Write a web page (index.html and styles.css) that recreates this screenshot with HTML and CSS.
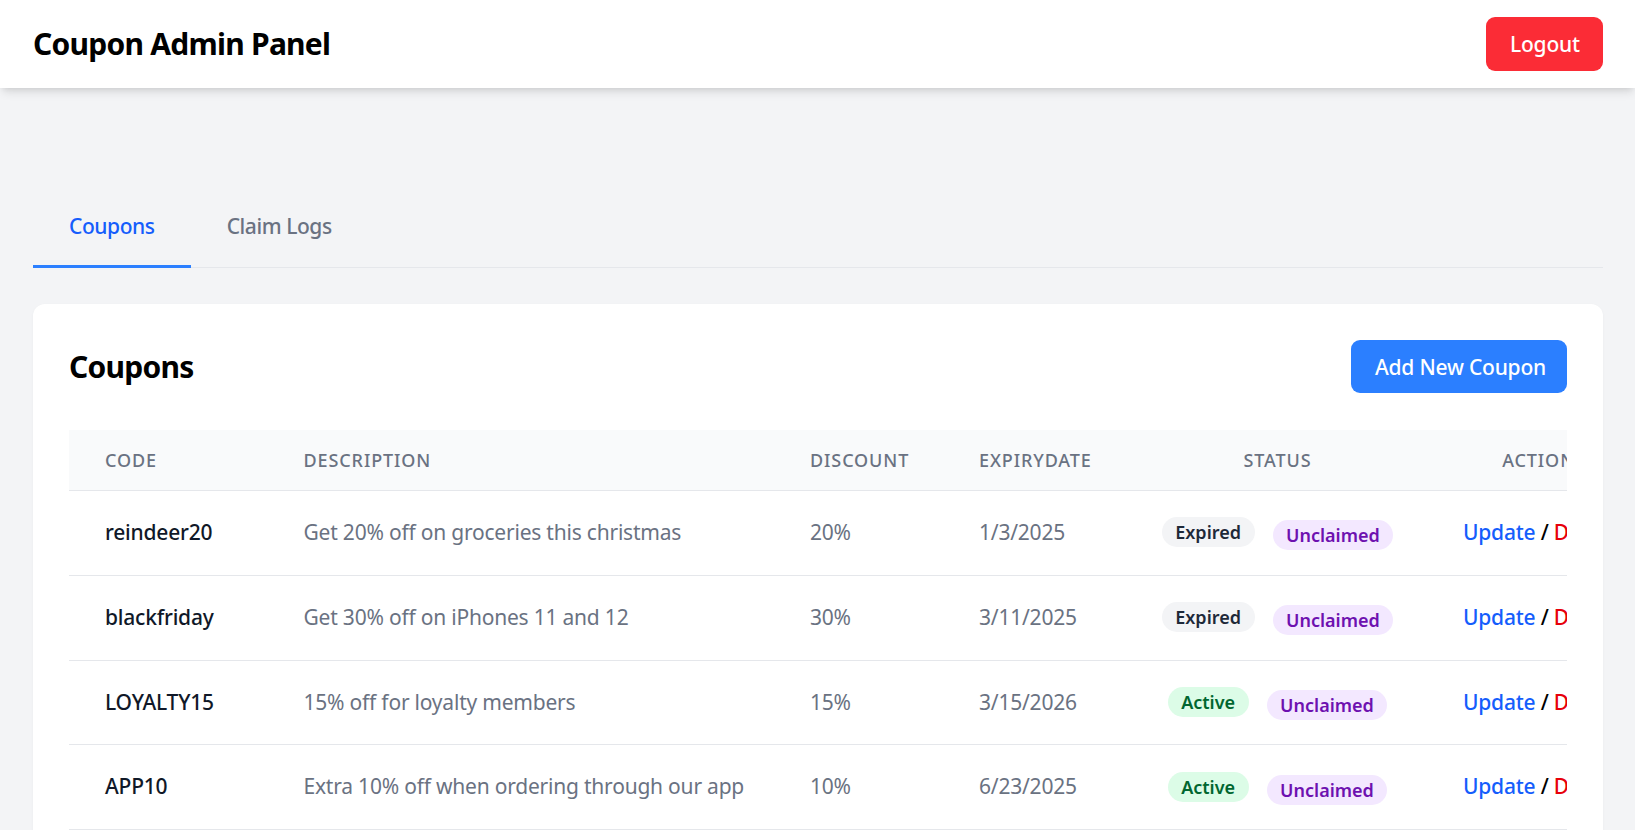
FILE: index.html
```html
<!DOCTYPE html>
<html lang="en">
<head>
<meta charset="utf-8">
<title>Coupon Admin Panel</title>
<link rel="stylesheet" href="styles.css">
</head>
<body>
<header class="topbar">
  <h1 class="brand">Coupon Admin Panel</h1>
  <button class="btn btn-logout">Logout</button>
</header>
<main class="main">
  <nav class="tabs">
    <a class="tab tab-active">Coupons</a>
    <a class="tab">Claim Logs</a>
  </nav>
  <section class="card">
    <div class="card-head">
      <h2 class="card-title">Coupons</h2>
      <button class="btn btn-add">Add New Coupon</button>
    </div>
    <div class="table-wrap">
      <table class="table">
        <colgroup>
          <col class="c-code"><col class="c-desc"><col class="c-disc"><col class="c-exp"><col class="c-status"><col class="c-actions">
        </colgroup>
        <thead>
          <tr>
            <th>Code</th>
            <th>Description</th>
            <th>Discount</th>
            <th>ExpiryDate</th>
            <th class="center">Status</th>
            <th class="center">Actions</th>
          </tr>
        </thead>
        <tbody>
          <tr>
            <td class="code">reindeer20</td>
            <td>Get 20% off on groceries this christmas</td>
            <td>20%</td>
            <td>1/3/2025</td>
            <td><div class="badges"><span class="badge badge-expired">Expired</span><span class="badge badge-unclaimed">Unclaimed</span></div></td>
            <td class="actions"><a class="link-update">Update</a> / <a class="link-delete">Delete</a></td>
          </tr>
          <tr>
            <td class="code">blackfriday</td>
            <td>Get 30% off on iPhones 11 and 12</td>
            <td>30%</td>
            <td>3/11/2025</td>
            <td><div class="badges"><span class="badge badge-expired">Expired</span><span class="badge badge-unclaimed">Unclaimed</span></div></td>
            <td class="actions"><a class="link-update">Update</a> / <a class="link-delete">Delete</a></td>
          </tr>
          <tr>
            <td class="code">LOYALTY15</td>
            <td>15% off for loyalty members</td>
            <td>15%</td>
            <td>3/15/2026</td>
            <td><div class="badges"><span class="badge badge-active">Active</span><span class="badge badge-unclaimed">Unclaimed</span></div></td>
            <td class="actions"><a class="link-update">Update</a> / <a class="link-delete">Delete</a></td>
          </tr>
          <tr>
            <td class="code">APP10</td>
            <td>Extra 10% off when ordering through our app</td>
            <td>10%</td>
            <td>6/23/2025</td>
            <td><div class="badges"><span class="badge badge-active">Active</span><span class="badge badge-unclaimed">Unclaimed</span></div></td>
            <td class="actions"><a class="link-update">Update</a> / <a class="link-delete">Delete</a></td>
          </tr>
        </tbody>
      </table>
    </div>
  </section>
</main>
</body>
</html>
```

FILE: styles.css
```css
* { box-sizing: border-box; }

html, body {
  margin: 0;
  padding: 0;
}

body {
  background: #f3f4f6;
  font-family: "Noto Sans", "Open Sans", sans-serif;
  color: #000;
}

.topbar {
  height: 88px;
  background: #fff;
  display: flex;
  align-items: center;
  justify-content: space-between;
  padding: 0 32px 0 33px;
  box-shadow: 0 6px 9px -1.5px rgba(0, 0, 0, 0.1), 0 3px 6px -3px rgba(0, 0, 0, 0.1);
  position: relative;
}

.brand {
  margin: 0;
  font-size: 30px;
  line-height: 42px;
  font-weight: 700;
  letter-spacing: -0.025em;
  color: #000;
}

.btn {
  border: 0;
  font-family: inherit;
  font-size: 21px;
  line-height: 30px;
  font-weight: 500;
  color: #fff;
  border-radius: 9px;
  cursor: pointer;
  white-space: nowrap;
}

.btn-logout {
  background: #fb2c36;
  padding: 12px 24px;
  width: 117px;
  text-align: center;
  letter-spacing: -0.01em;
}

.btn-add {
  background: #2b7fff;
  padding: 0 24px;
  width: 216px;
  height: 53px;
  letter-spacing: -0.01em;
}

.main {
  padding: 99px 32px 40px 33px;
}

.tabs {
  display: flex;
  border-bottom: 1px solid #e5e7eb;
}

.tab {
  display: block;
  padding: 24px 36px;
  font-size: 21px;
  line-height: 30px;
  font-weight: 500;
  letter-spacing: -0.02em;
  color: #6a7282;
  border-bottom: 3px solid transparent;
  margin-bottom: -1px;
}

.tab-active {
  color: #155dfc;
  border-bottom-color: #2b7fff;
}

.card {
  margin-top: 36px;
  background: #fff;
  border-radius: 12px;
  padding: 36px;
  box-shadow: 0 1px 3px rgba(0, 0, 0, 0.04);
}

.card-head {
  display: flex;
  align-items: center;
  justify-content: space-between;
  margin-bottom: 37px;
}

.card-title {
  margin: 0;
  font-size: 30px;
  line-height: 42px;
  font-weight: 700;
  letter-spacing: -0.025em;
  color: #000;
}

.table-wrap {
  overflow-x: auto;
}

.table {
  border-collapse: collapse;
  table-layout: fixed;
  width: 1592px;
}

.c-code { width: 198.5px; }
.c-desc { width: 506.5px; }
.c-disc { width: 169px; }
.c-exp { width: 185px; }
.c-status { width: 299px; }
.c-actions { width: 234px; }

.table th {
  background: #f9fafb;
  padding: 18px 36px;
  font-size: 18px;
  line-height: 24px;
  font-weight: 500;
  letter-spacing: 0.05em;
  text-transform: uppercase;
  color: #6a7282;
  text-align: left;
  border-bottom: 1px solid #e5e7eb;
  white-space: nowrap;
}

.table th.center { text-align: center; }

.table td {
  padding: 24px 36px;
  font-size: 21px;
  line-height: 35.75px;
  color: #6a7282;
  border-bottom: 1px solid #e5e7eb;
  white-space: nowrap;
  vertical-align: middle;
  letter-spacing: -0.01em;
}

.table td.code {
  color: #101828;
  font-weight: 500;
}

.badges {
  display: flex;
  justify-content: center;
  align-items: flex-start;
  gap: 18px;
  padding-top: 2px;
}

.badge {
  display: inline-block;
  padding: 0 13.5px;
  height: 30px;
  font-size: 18px;
  line-height: 30px;
  font-weight: 600;
  letter-spacing: 0;
  border-radius: 999px;
}

.badge-expired { background: #f3f4f6; color: #1e2939; }
.badge-active { background: #dcfce7; color: #016630; }
.badge-unclaimed {
  background: #f3e8ff;
  color: #6e11b0;
  margin-top: 3px;
}

.table td.actions {
  color: #000;
  font-weight: 500;
}

.link-update { color: #155dfc; }
.link-delete { color: #e7000b; }
```
